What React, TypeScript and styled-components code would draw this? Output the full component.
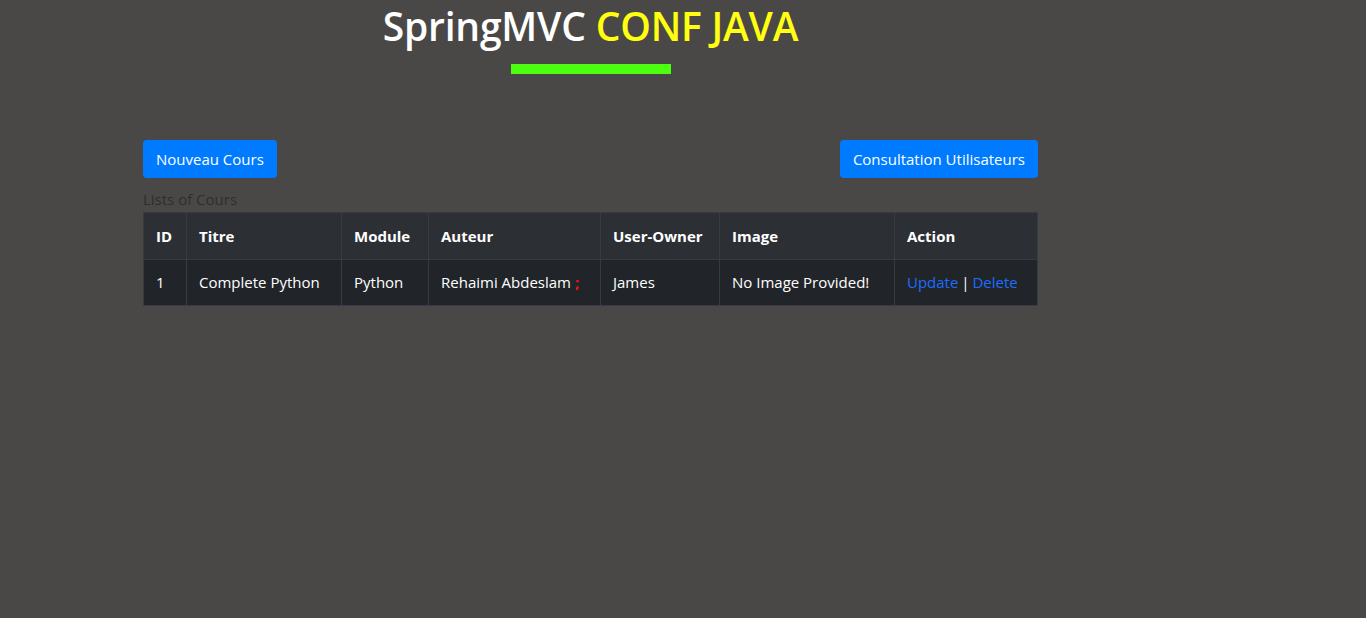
import React from "react";
import styled, { createGlobalStyle } from "styled-components";

const Global = createGlobalStyle`
  html, body { margin: 0; padding: 0; background: #4a4846; }
  body { font-family: "Open Sans", "Noto Sans", sans-serif; font-size: 15px; color: #fff; }
  * { box-sizing: border-box; }
`;

const Page = styled.div`
  width: 1366px;
  height: 618px;
  background: #4a4846;
  overflow: hidden;
`;

const Column = styled.main`
  width: 895px;
  margin-left: 143px;
  display: flex;
  flex-direction: column;
`;

const Header = styled.header`
  display: flex;
  flex-direction: column;
  align-items: center;
`;

const Title = styled.h1`
  margin: 0;
  padding-top: 2px;
  font-size: 39px;
  font-weight: 600;
  line-height: 48px;
  letter-spacing: -0.2px;
  color: #ffffff;
`;

const Accent = styled.span`
  color: #ffff0f;
`;

const Underline = styled.div`
  width: 160px;
  height: 10px;
  margin-top: 14px;
  background: #4cff10;
`;

const Toolbar = styled.div`
  display: flex;
  justify-content: space-between;
  margin-top: 66px;
`;

const Button = styled.a`
  display: inline-flex;
  align-items: center;
  height: 38px;
  padding: 0 13px;
  background: #007bff;
  color: #fff;
  border-radius: 4px;
  font-size: 15px;
  text-decoration: none;
`;

const Caption = styled.div`
  margin-top: 11px;
  height: 23px;
  line-height: 21px;
  color: #2e2e2e;
  font-size: 15px;
`;

const Table = styled.table`
  border-collapse: collapse;
  table-layout: fixed;
  width: 894px;
  font-size: 15px;
`;

const HeadCell = styled.th`
  height: 47px;
  padding: 0 12px 1px;
  text-align: left;
  font-weight: 700;
  background: #2c2f34;
  border: 1px solid #383c42;
  color: #fff;
  white-space: nowrap;
`;

const Cell = styled.td`
  height: 46px;
  padding: 0 12px 1px;
  background: #212529;
  border: 1px solid #383c42;
  color: #fff;
  white-space: nowrap;
`;

const Semi = styled.span`
  color: #ff1010;
  font-weight: 700;
`;

const Link = styled.a`
  color: #1a6dff;
  text-decoration: none;
`;

const Sep = styled.span`
  margin: 0 -1px;
`;

const widths = [43, 155, 87, 172, 119, 175, 143];
const heads = ["ID", "Titre", "Module", "Auteur", "User-Owner", "Image", "Action"];

export default function App() {
  return (
    <Page>
      <Global />
      <Column>
        <Header>
          <Title>
            SpringMVC <Accent>CONF JAVA</Accent>
          </Title>
          <Underline />
        </Header>
        <Toolbar>
          <Button href="#">Nouveau Cours</Button>
          <Button href="#">Consultation Utilisateurs</Button>
        </Toolbar>
        <Caption>Lists of Cours</Caption>
        <Table>
          <colgroup>
            {widths.map((w, i) => (
              <col key={i} style={{ width: w }} />
            ))}
          </colgroup>
          <thead>
            <tr>
              {heads.map((h) => (
                <HeadCell key={h}>{h}</HeadCell>
              ))}
            </tr>
          </thead>
          <tbody>
            <tr>
              <Cell>1</Cell>
              <Cell>Complete Python</Cell>
              <Cell>Python</Cell>
              <Cell>
                Rehaimi Abdeslam <Semi>;</Semi>
              </Cell>
              <Cell>James</Cell>
              <Cell>No Image Provided!</Cell>
              <Cell>
                <Link href="#">Update</Link>
                <Sep> | </Sep>
                <Link href="#">Delete</Link>
              </Cell>
            </tr>
          </tbody>
        </Table>
      </Column>
    </Page>
  );
}
